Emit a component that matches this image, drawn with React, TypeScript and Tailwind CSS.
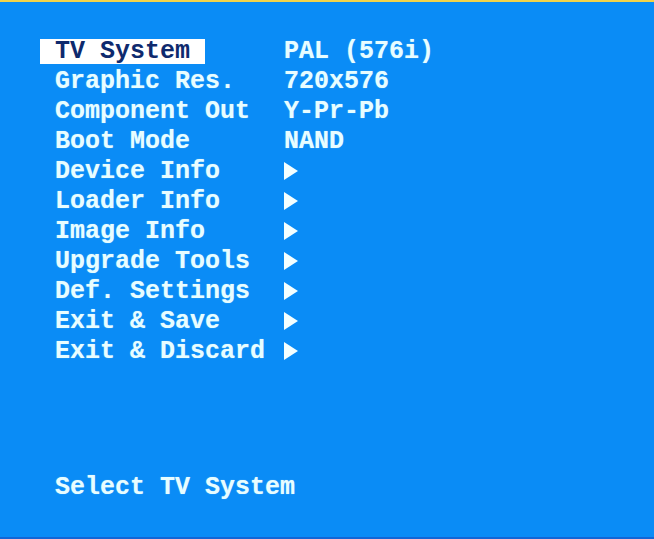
import React from "react";

const rows: { label: string; value?: string; arrow?: boolean; selected?: boolean }[] = [
  { label: "TV System", value: "PAL (576i)", selected: true },
  { label: "Graphic Res.", value: "720x576" },
  { label: "Component Out", value: "Y-Pr-Pb" },
  { label: "Boot Mode", value: "NAND" },
  { label: "Device Info", arrow: true },
  { label: "Loader Info", arrow: true },
  { label: "Image Info", arrow: true },
  { label: "Upgrade Tools", arrow: true },
  { label: "Def. Settings", arrow: true },
  { label: "Exit & Save", arrow: true },
  { label: "Exit & Discard", arrow: true },
];

function Arrow() {
  return (
    <svg width="14" height="18" viewBox="0 0 14 18" className="flex-none block w-[14px] h-[18px] -mt-[1px]">
      <polygon points="0,0 14,9 0,18" fill="#f4ffff" />
    </svg>
  );
}

export default function App() {
  return (
    <div
      className="w-[654px] h-[539px] bg-[#0a8cf6] border-t-2 border-t-[#f2d34a] border-b-2 border-b-[#1266d6] text-[#e8fdff] text-[25px] font-bold leading-none flex flex-col pt-[34px] pl-[55px]"
      style={{ fontFamily: '"Liberation Mono", "DejaVu Sans Mono", monospace', textShadow: "0 0 1px rgba(220,255,255,0.6)" }}
    >
      <div className="flex flex-col">
        {rows.map((r) => (
          <div key={r.label} className="h-[30px] flex items-center">
            <div className="w-[229px] flex-none flex items-center whitespace-pre">
              {r.selected ? (
                <span className="-ml-[15px] pl-[15px] w-[165px] h-[25px] bg-white text-[#0e2a6e] flex items-center" style={{ textShadow: "none" }}>
                  {r.label}
                </span>
              ) : (
                <span>{r.label}</span>
              )}
            </div>
            {r.value && <span className="whitespace-pre">{r.value}</span>}
            {r.arrow && <Arrow />}
          </div>
        ))}
      </div>
      <div className="h-[30px] flex items-center mt-[106px]">Select TV System</div>
    </div>
  );
}
